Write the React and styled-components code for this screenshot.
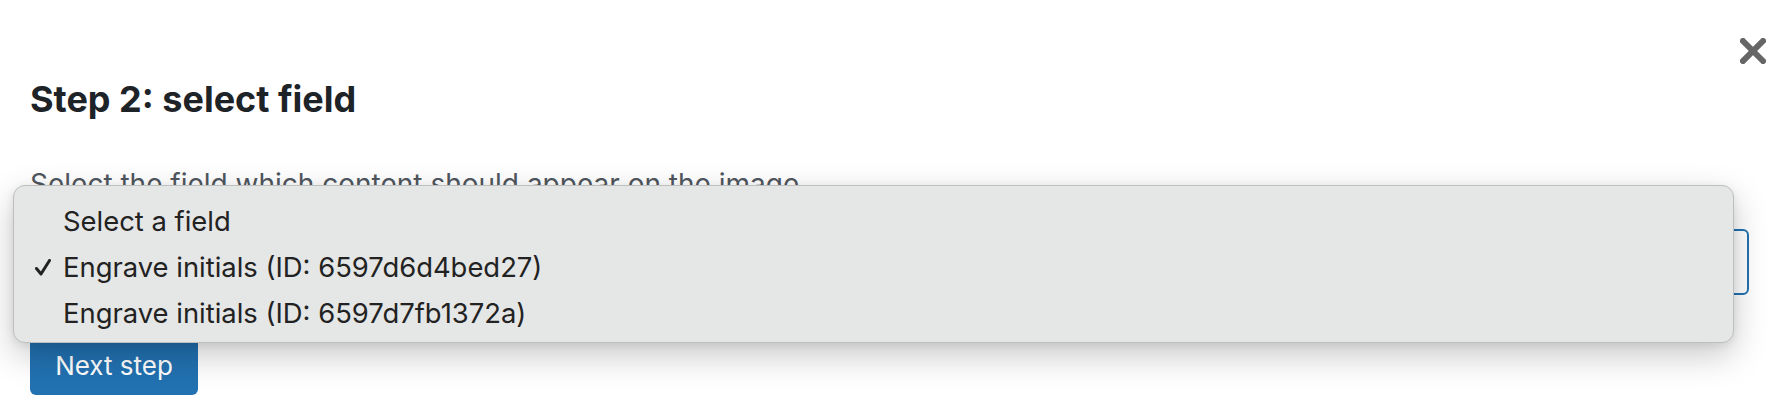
import React from 'react';
import styled, { createGlobalStyle } from 'styled-components';

const GlobalStyle = createGlobalStyle`
  html, body {
    margin: 0;
    padding: 0;
    background: #fff;
  }
  body {
    font-family: Inter, "Noto Sans", "Liberation Sans", sans-serif;
    color: #1d2327;
  }
`;

const Modal = styled.div`
  position: relative;
  width: 1780px;
  height: 412px;
  box-sizing: border-box;
  padding: 79px 31px 0 30px;
  overflow: hidden;
  display: flex;
  flex-direction: column;
  align-items: stretch;
`;

const CloseButton = styled.button`
  position: absolute;
  top: 38px;
  right: 14px;
  width: 26px;
  height: 26px;
  padding: 0;
  border: 0;
  background: none;
  color: #666;
  cursor: pointer;
  svg {
    display: block;
  }
`;

const Title = styled.h2`
  margin: 0;
  font-size: 36px;
  line-height: 40px;
  font-weight: 700;
  color: #1d2327;
`;

const Description = styled.p`
  margin: 47px 0 0;
  font-size: 28px;
  line-height: 36px;
  color: #50575e;
`;

const SelectBox = styled.div`
  margin-top: 27px;
  height: 66px;
  box-sizing: border-box;
  border: 2px solid #2271b1;
  border-radius: 6px;
  background: #fff;
`;

const PrimaryButton = styled.button`
  align-self: flex-start;
  margin-top: 37px;
  height: 63px;
  width: 168px;
  padding: 4px 0 0;
  border: 0;
  border-radius: 6px;
  background: #2271b1;
  color: #fff;
  font-family: inherit;
  font-size: 26px;
  cursor: pointer;
`;

const Popup = styled.ul`
  position: absolute;
  left: 13px;
  top: 185px;
  width: 1721px;
  height: 158px;
  box-sizing: border-box;
  margin: 0;
  padding: 12px 0 0 21px;
  list-style: none;
  display: flex;
  flex-direction: column;
  background: #e5e6e6;
  border: 1px solid #bdbebe;
  border-radius: 12px;
  box-shadow: 0 12px 34px rgba(0, 0, 0, 0.22), 0 2px 8px rgba(0, 0, 0, 0.08);
`;

const Option = styled.li`
  display: flex;
  align-items: center;
  height: 46px;
  font-size: 27.4px;
  color: #222;
  white-space: nowrap;
`;

const CheckSlot = styled.span`
  display: flex;
  align-items: center;
  width: 28px;
  flex: none;
  svg {
    display: block;
  }
`;

const fields = [
  { label: 'Select a field' },
  { label: 'Engrave initials (ID: 6597d6d4bed27)', selected: true },
  { label: 'Engrave initials (ID: 6597d7fb1372a)' },
];

export default function App() {
  return (
    <>
      <GlobalStyle />
      <Modal>
        <CloseButton aria-label="Close">
          <svg width="26" height="26" viewBox="0 0 26 26">
            <path d="M3 3 L23 23 M23 3 L3 23" stroke="currentColor" strokeWidth="6" strokeLinecap="square" fill="none" />
          </svg>
        </CloseButton>
        <Title>Step 2: select field</Title>
        <Description>Select the field which content should appear on the image</Description>
        <SelectBox />
        <PrimaryButton>Next step</PrimaryButton>
        <Popup>
          {fields.map((f) => (
            <Option key={f.label}>
              <CheckSlot>
                {f.selected && (
                  <svg width="16" height="17" viewBox="0 0 16 17">
                    <path d="M1.5 9.5 L6 15 L14.5 1.5" stroke="#222" strokeWidth="3" fill="none" strokeLinecap="round" strokeLinejoin="round" />
                  </svg>
                )}
              </CheckSlot>
              {f.label}
            </Option>
          ))}
        </Popup>
      </Modal>
    </>
  );
}
